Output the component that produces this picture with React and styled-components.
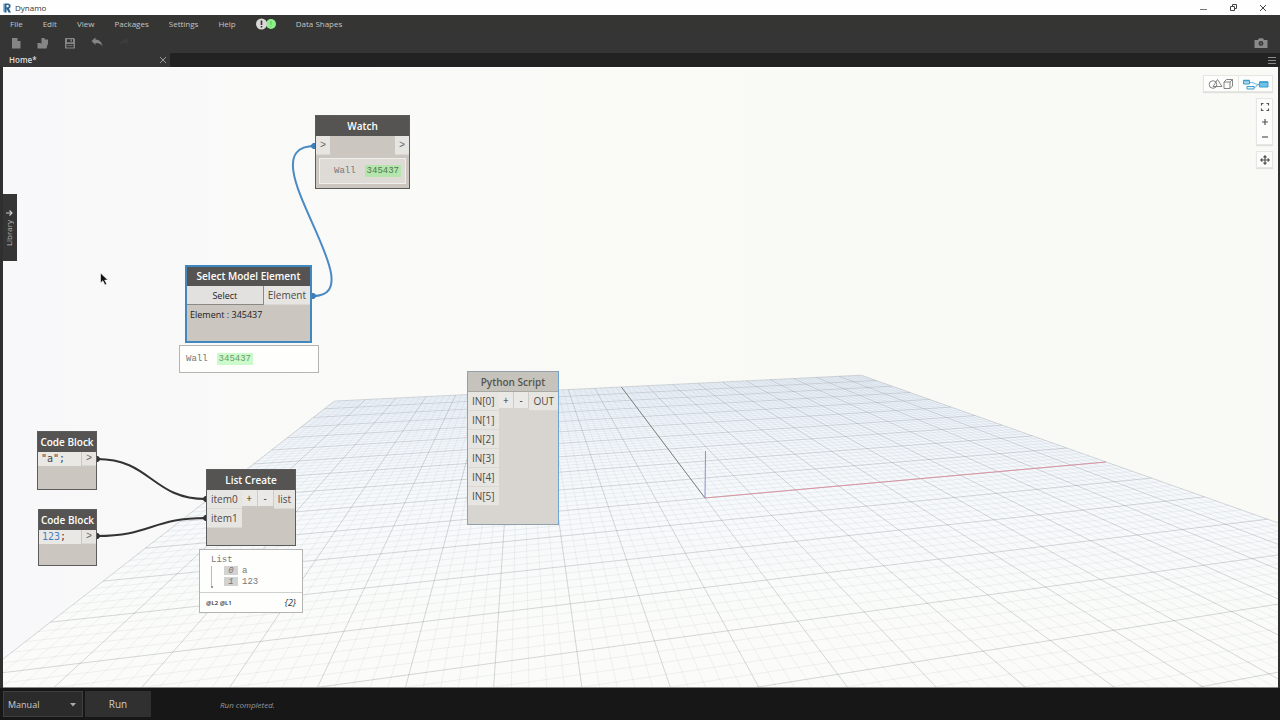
import React from 'react';
import styled, { createGlobalStyle, css } from 'styled-components';

const GlobalStyle = createGlobalStyle`
  * {
    box-sizing: border-box;
  }

  body {
    margin: 0;
    background-color: #2f2f2f;
    font-family: 'Open Sans', 'Noto Sans', sans-serif;
  }

  button,
  select {
    margin: 0;
    padding: 0;
    border: none;
    background: none;
    font-family: inherit;
    color: inherit;
  }

  svg {
    display: block;
  }
`;

const Window = styled.div`
  display: flex;
  flex-direction: column;
  height: 100vh;
  overflow: hidden;
`;

const TitleBar = styled.header`
  display: flex;
  align-items: center;
  justify-content: space-between;
  height: 15px;
  padding: 0 12px 0 2px;
  background-color: #fefefe;
  color: #333;
  flex-shrink: 0;
`;

const Brand = styled.h1`
  display: flex;
  align-items: center;
  gap: 3px;
  margin: 0;
  font-size: 8px;
  line-height: 15px;
  font-weight: 400;
`;

const WindowControls = styled.div`
  display: flex;
  gap: 20px;

  button {
    width: 10px;
    height: 10px;
  }
`;

const MenuBar = styled.nav`
  display: flex;
  align-items: center;
  gap: 20px;
  height: 18px;
  padding: 0 10px;
  background-color: #353533;
  color: #c4c4c4;
  flex-shrink: 0;

  button {
    font-size: 8px;
    line-height: 12px;
  }
`;

const Toolbar = styled.div`
  display: flex;
  align-items: center;
  gap: 15px;
  height: 20px;
  padding: 0 12px 0 10px;
  background-color: #353535;
  flex-shrink: 0;

  button:last-child {
    width: 14px;
    margin-left: auto;
  }
`;

const ToolButton = styled.button`
  width: 12px;
  height: 12px;
  color: ${({ $faint }) => ($faint ? '#3c3c3c' : '#858585')};
`;

const TabRow = styled.div`
  display: flex;
  align-items: center;
  justify-content: space-between;
  height: 14px;
  padding-right: 4px;
  background-color: #222;
  flex-shrink: 0;
`;

const Tab = styled.div`
  display: flex;
  align-items: center;
  justify-content: space-between;
  width: 170px;
  height: 14px;
  padding: 0 3px 0 9px;
  background-color: #353535;
  color: #ddd;
  font-size: 8px;
  font-weight: 600;
  line-height: 14px;

  button {
    width: 8px;
    height: 8px;
  }
`;

const TabMenu = styled.button`
  width: 8px;
  height: 8px;
`;

const Workspace = styled.main`
  position: relative;
  flex: 1;
  min-height: 0;
  margin: 0 2px 0 3px;
  overflow: hidden;
  border-top: 1px solid #fff;
  border-bottom: 1px solid #8a8a8a;
  background: linear-gradient(90deg, #f8f8fa 0, #fafaf8 30%, #f9faf5 60%);
`;

const Scene = styled.svg`
  position: absolute;
  inset: 0;
  width: 100%;
  height: 100%;
  pointer-events: none;
`;

const Library = styled.button`
  position: absolute;
  left: 0;
  top: 126px;
  display: flex;
  flex-direction: column;
  align-items: center;
  justify-content: center;
  gap: 3px;
  width: 14px;
  height: 67px;
  padding-right: 2px;
  background-color: #353535;
  color: #b5b5b5;

  span {
    writing-mode: vertical-rl;
    transform: rotate(180deg);
    font-size: 8px;
    line-height: 12px;
  }
`;

const ViewTools = styled.div`
  position: absolute;
  top: 7px;
  right: 5px;
  display: flex;
  flex-direction: column;
  align-items: flex-end;
  gap: 6px;
`;

const ToolGroup = styled.div`
  display: flex;
  flex-direction: ${({ $column }) => ($column ? 'column' : 'row')};
  border: 1px solid #e6e6e2;
  background-color: #fdfdfc;
  box-shadow: 0 1px 1px rgba(0, 0, 0, 0.1);

  button {
    display: flex;
    align-items: center;
    justify-content: center;
    width: ${({ $wide }) => ($wide ? '34px' : '15px')};
    height: 15px;
  }

  button + button {
    border-left: ${({ $wide }) => ($wide ? '1px solid #e6e6e2' : 'none')};
  }
`;

const NodeBox = styled.section`
  position: absolute;
  left: ${({ $x }) => $x}px;
  top: ${({ $y }) => $y}px;
  width: ${({ $w }) => $w}px;
  height: ${({ $h }) => $h}px;
  border: 1px solid #5c5c5c;
  background-color: #ccc6c0;
  color: #4a4a4a;

  h2 {
    margin: 0;
    height: 20px;
    background-color: #555452;
    color: #fff;
    font-size: 10px;
    font-weight: 600;
    line-height: 20px;
    text-align: center;
    white-space: nowrap;
  }

  ${({ $selected }) =>
    $selected &&
    css`
      border: 2px solid #4088bf;

      h2 {
        height: 19px;
        line-height: 19px;
      }
    `}

  ${({ $frozen }) =>
    $frozen &&
    css`
      border-color: #93a0ac;
      border-right-color: #6fa3d6;
      background-color: #d8d5d0;

      h2 {
        background-color: #c6c3bd;
        border-bottom: 1px solid #a9a7a2;
        color: #55554f;
      }
    `}
`;

const Row = styled.div`
  display: flex;
  justify-content: space-between;
  align-items: flex-start;
`;

const Ports = styled.div`
  display: flex;
  flex-direction: column;
`;

const Port = styled.span`
  min-width: 14px;
  height: ${({ $short }) => ($short ? '14px' : '19px')};
  padding: 0 4px;
  border-bottom: 1px solid #dad8d3;
  background-color: #e7e5e1;
  font-size: 10px;
  line-height: ${({ $short }) => ($short ? '14px' : '19px')};
  text-align: center;
  white-space: nowrap;
`;

const Arrow = styled(Port)`
  padding: 0 3px;
  font-family: 'Liberation Mono', monospace;
  color: #666;
`;

const SmallButton = styled.button`
  flex: 1;
  height: 16px;
  border-right: 1px solid #cfccc8;
  background-color: #ebe9e5;
  color: #333;
  font-size: 10px;
  line-height: 16px;
`;

const SelectButton = styled.button`
  flex: 1;
  height: 19px;
  border-right: 1px solid #8b8985;
  border-bottom: 1px solid #8b8985;
  background-color: #e2e1df;
  color: #222;
  font-size: 9px;
`;

const NodeText = styled.p`
  margin: 0;
  padding: 4px 3px;
  color: #222;
  font-size: 9px;
  line-height: 12px;
`;

const CodeLine = styled.code`
  flex: 1;
  height: 14px;
  padding-left: 3px;
  border-right: 1px solid #c9c5c0;
  background-color: #eae8e4;
  color: #444;
  font-family: 'DejaVu Sans Mono', monospace;
  font-size: 10px;
  line-height: 14px;

  b {
    font-weight: 400;
    color: #3f80c4;
  }
`;

const WatchBox = styled.div`
  display: flex;
  align-items: center;
  gap: 9px;
  height: 26px;
  margin: 3px;
  padding-left: 14px;
  border: 1px solid #f0eeea;
  background-color: #dedbd6;
  color: #777;
  font-family: 'Liberation Mono', monospace;
  font-size: 9px;
`;

const ElementId = styled.span`
  padding: 1px 2px;
  background-color: ${({ $light }) => ($light ? '#cdfacb' : '#b5e5ac')};
  color: ${({ $light }) => ($light ? '#6b9a6b' : '#4d7a4d')};
  line-height: 10px;
`;

const Preview = styled.div`
  position: absolute;
  left: ${({ $x }) => $x}px;
  top: ${({ $y }) => $y}px;
  width: ${({ $w }) => $w}px;
  height: ${({ $h }) => $h}px;
  border: 1px solid #b4b4b2;
  background-color: #fefefd;
  color: #777;
  font-family: 'Liberation Mono', monospace;
  font-size: 9px;
`;

const PreviewLine = styled.div`
  display: flex;
  align-items: center;
  gap: 9px;
  height: 26px;
  padding-left: 6px;
`;

const ListTree = styled.div`
  height: 43px;
  padding: 5px 0 0 11px;
  border-bottom: 1px solid #cfcfcd;
  line-height: 11px;

  ol {
    margin: 0;
    padding: 0 0 0 13px;
    list-style: none;
    background: linear-gradient(#999, #999) 0 20px / 2px 2px no-repeat,
      linear-gradient(#bbb, #bbb) 0 0 / 1px 22px no-repeat;
  }

  li {
    display: flex;
    gap: 4px;
    height: 11px;
  }

  i {
    width: 14px;
    height: 9px;
    background-color: #d2d2d0;
    line-height: 10px;
    text-align: center;
  }
`;

const ListFooter = styled.div`
  display: flex;
  align-items: center;
  justify-content: space-between;
  height: 19px;
  padding: 0 6px;
  color: #333;
  font-family: 'Open Sans', sans-serif;
  font-size: 6px;
  font-weight: 600;

  em {
    font-size: 9px;
    font-weight: 400;
  }
`;

const StatusBar = styled.footer`
  display: flex;
  align-items: center;
  gap: 2px;
  height: 32px;
  padding: 0 3px;
  background-color: #171717;
  color: #ccc;
  flex-shrink: 0;
`;

const RunMode = styled.label`
  position: relative;
  width: 80px;

  select {
    width: 100%;
    height: 26px;
    padding-left: 4px;
    border: 1px solid #3f3f3f;
    background-color: #2b2b2b;
    font-size: 9px;
    appearance: none;
  }

  svg {
    position: absolute;
    right: 7px;
    top: 12px;
  }
`;

const RunButton = styled.button`
  width: 66px;
  height: 26px;
  background-color: #303030;
  font-size: 10px;
`;

const Status = styled.span`
  padding-left: 67px;
  color: #999;
  font-size: 8px;
  font-style: italic;
`;

// Perspective of the ground plane, in workspace pixels. The two axes run to
// their own vanishing points from the origin.
const ORIGIN = [702, 430];
const VANISH_X = [3532, 176];
const VANISH_Y = [519, 187];
const SCALE_X = 0.01651;
const SCALE_Y = 0.0841;
const NEAR = -9;

const project = (u, v) => {
  const a = u * SCALE_X;
  const b = v * SCALE_Y;
  const w = 1 + a + b;
  return [0, 1]
    .map((i) => ((ORIGIN[i] + a * VANISH_X[i] + b * VANISH_Y[i]) / w).toFixed(1))
    .join(' ');
};

const segment = (u1, v1, u2, v2) => `M${project(u1, v1)}L${project(u2, v2)}`;

const gridPath = (major) => {
  const lines = [];
  for (let i = -50; i <= 50; i += 1) {
    if ((i % 5 === 0) === major) {
      lines.push(segment(i / 5, NEAR, i / 5, 10));
      if (i / 5 >= NEAR) lines.push(segment(-10, i / 5, 10, i / 5));
    }
  }
  return lines.join('');
};

const ground = `M${project(-10, 10)}L${project(10, 10)}L${project(10, NEAR)}L${project(-10, NEAR)}Z`;

const Background = () => (
  <Scene aria-hidden="true">
    <defs>
      <linearGradient id="ground" gradientUnits="userSpaceOnUse" x1="0" y1="307" x2="0" y2="560">
        <stop offset="0" stopColor="#edf3fa" />
        <stop offset="0.4" stopColor="#f5f8fb" />
        <stop offset="1" stopColor="#fbfcf9" />
      </linearGradient>
    </defs>
    <path d={ground} fill="url(#ground)" />
    <g fill="none">
      <path d={gridPath(false)} stroke="#8494a4" strokeOpacity="0.11" />
      <path d={gridPath(true)} stroke="#707880" strokeOpacity="0.28" />
      <path d={segment(0, 0, 0, 10)} stroke="#7c877d" />
      <path d={segment(0, 0, 10, 0)} stroke="#d895a0" />
      <path d="M702 430L702.500 383" stroke="#8a92c8" />
    </g>
  </Scene>
);

const Wires = () => (
  <Scene aria-hidden="true">
    <g fill="none" strokeWidth="2">
      <path d="M310 228C376 228 239 78 312 78" stroke="#4a8ac4" />
      <path d="M94 391C148 391 149 431 203 431" stroke="#333" />
      <path d="M94 468C148 468 149 450 203 450" stroke="#333" />
    </g>
    <g fill="#3d7fba">
      <path d="M309 225h2l3 3l-3 3h-2z" />
      <path d="M312 75h-2l-3 3l3 3h2z" />
    </g>
    <g fill="#333">
      <path d="M94 388h1l3 3l-3 3h-1zM94 465h1l3 3l-3 3h-1z" />
      <path d="M203 428h-1l-3 3l3 3h1zM203 447h-1l-3 3l3 3h1z" />
    </g>
  </Scene>
);

const Pointer = () => (
  <Scene aria-hidden="true">
    <path
      d="M97.500 205v10l2.400 -2.200l2 4.200l1.800 -0.900l-2 -4h3.200z"
      fill="#111"
      stroke="#fff"
      strokeWidth="0.600"
    />
  </Scene>
);

const RevitLogo = () => (
  <svg width="10" height="10" viewBox="0 0 10 10">
    <path d="M1 0.500l1.800 0.500v8.500l-1.800 -1z" fill="#8fbfe2" />
    <path
      fillRule="evenodd"
      d="M2.500 0.500h4l2 1.200v2.600l-1.500 1.400l2 3.800h-2.500l-1.700 -3.300h-0.300v3.300h-2zM4.500 2v2.200h1.600l0.600 -0.600v-1l-0.600 -0.600z"
      fill="#2d6390"
    />
  </svg>
);

const Notices = () => (
  <svg width="20" height="12" viewBox="0 0 20 12" role="img" aria-label="Notifications">
    <circle cx="15" cy="6" r="5" fill="#8df08a" />
    <path d="M15 3v4M15 8v1" stroke="#6fd070" strokeWidth="1.500" />
    <circle cx="5.500" cy="6" r="5.500" fill="#d9d9d7" />
    <path d="M5.500 2.500v4.500M5.500 8v1.500" stroke="#333" strokeWidth="1.600" />
  </svg>
);

const icons = {
  new: <path d="M2 1h5.500l3 3v7.500h-8.500zM7.500 1v3h3" />,
  open: <path d="M4.500 1h3l0.500 1.500h3v5h-6.500zM0.500 6h3l1.500 1.500h5.500l-1 4h-9z" />,
  save: (
    <path
      fillRule="evenodd"
      d="M1 1h9l1 1v9.500h-10zM3 2.200v3h6v-3zM2.500 7v3.500h7v-3.500zM3.500 8h5v0.800h-5zM6.500 2.500h1.500v2h-1.500z"
    />
  ),
  undo: <path d="M0.500 4l4 -3.500v2c4 0.200 6.500 3 7 7c-1.500 -2.800 -3.800 -3.600 -7 -3.500v2z" />,
  redo: <path d="M11.500 4l-4 -3.500v2c-4 0.200 -6.500 3 -7 7c1.500 -2.800 3.800 -3.600 7 -3.500v2z" />,
};

const Camera = () => (
  <svg width="14" height="12" viewBox="0 0 14 12">
    <path d="M0.500 3h3.500l1 -1.800h4l1 1.800h3.500v8h-13z" fill="#8a8a8a" />
    <circle cx="7" cy="6.500" r="2.400" fill="#3a3a3a" />
    <circle cx="7" cy="6.500" r="1" fill="#666" />
  </svg>
);

const Geometry = () => (
  <svg width="26" height="12" viewBox="0 0 26 12" fill="none" stroke="#777" strokeWidth="0.900">
    <circle cx="5" cy="6.500" r="3.800" />
    <path d="M5 8.500l4.500 -7l4.500 7z" />
    <path d="M16 4h6v6.500h-6zM16 4l2.500 -2.500h6l-2.500 2.500M24.500 1.500v6.500l-2.500 2.500" />
  </svg>
);

const Graph = () => (
  <svg width="26" height="12" viewBox="0 0 26 12" fill="none" stroke="#3a9fd0">
    <path d="M7 4.500c5 0 5 2 9 2M11 9.500c3 0 2 -3 5 -3" strokeWidth="0.800" />
    <path d="M0.500 2.500h6v3.500h-6z" fill="#a9d8ee" />
    <path d="M4 8.500h7v2.500h-7z" fill="#dff1f9" />
    <path d="M16.500 4h8.500v5h-8.500z" fill="#6ec0e4" />
    <path d="M0.500 2.500h6M16.500 4h8.500" strokeWidth="1.500" />
  </svg>
);

const viewIcons = {
  fit: <path d="M1.500 3.500v-2h2M6.500 1.500h2v2M8.500 6.500v2h-2M3.500 8.500h-2v-2" />,
  plus: <path d="M2 5h6M5 2v6" />,
  minus: <path d="M2 5h6" />,
  pan: (
    <path d="M1 5h8M5 1v8M3.500 2.300l1.500 -1.500l1.500 1.500M3.500 7.700l1.500 1.500l1.500 -1.500M2.300 3.500l-1.500 1.500l1.500 1.500M7.700 3.500l1.500 1.500l-1.500 1.500" />
  ),
};

const ViewButton = ({ icon, label }) => (
  <button aria-label={label}>
    <svg width="10" height="10" viewBox="0 0 10 10" fill="none" stroke="#555" strokeWidth="1.200">
      {viewIcons[icon]}
    </svg>
  </button>
);

const Header = () => (
  <>
    <TitleBar>
      <Brand>
        <RevitLogo />
        Dynamo
      </Brand>
      <WindowControls>
        <button aria-label="Minimize">
          <svg width="10" height="10" stroke="#777">
            <path d="M2 6.500h7" />
          </svg>
        </button>
        <button aria-label="Restore">
          <svg width="10" height="10" fill="none" stroke="#444">
            <path d="M2.500 3.500h4v4h-4zM4.500 3.500v-2h4v4h-2" />
          </svg>
        </button>
        <button aria-label="Close">
          <svg width="10" height="10" stroke="#444">
            <path d="M2 2l6 6M8 2l-6 6" />
          </svg>
        </button>
      </WindowControls>
    </TitleBar>
    <MenuBar>
      {['File', 'Edit', 'View', 'Packages', 'Settings', 'Help'].map((item) => (
        <button key={item}>{item}</button>
      ))}
      <Notices />
      <button>Data Shapes</button>
    </MenuBar>
    <Toolbar>
      {Object.keys(icons).map((name) => (
        <ToolButton key={name} aria-label={name} $faint={name === 'redo'}>
          <svg width="12" height="12" viewBox="0 0 12 12" fill="currentColor">
            {icons[name]}
          </svg>
        </ToolButton>
      ))}
      <ToolButton aria-label="Export image">
        <Camera />
      </ToolButton>
    </Toolbar>
    <TabRow>
      <Tab>
        Home*
        <button aria-label="Close tab">
          <svg width="8" height="8" stroke="#999">
            <path d="M1 1l6 6M7 1l-6 6" />
          </svg>
        </button>
      </Tab>
      <TabMenu aria-label="Tabs">
        <svg width="8" height="8" stroke="#8a8a8a">
          <path d="M0 1.500h8M0 4.500h8M0 7.500h8" />
        </svg>
      </TabMenu>
    </TabRow>
  </>
);

const CodeBlock = ({ x, y, h, w, children }) => (
  <NodeBox $x={x} $y={y} $w={w} $h={h}>
    <h2>Code Block</h2>
    <Row>
      <CodeLine>{children}</CodeLine>
      <Arrow $short>&gt;</Arrow>
    </Row>
  </NodeBox>
);

const Nodes = () => (
  <>
    <NodeBox $x={312} $y={47} $w={95} $h={74}>
      <h2>Watch</h2>
      <Row>
        <Arrow>&gt;</Arrow>
        <Arrow>&gt;</Arrow>
      </Row>
      <WatchBox>
        Wall <ElementId>345437</ElementId>
      </WatchBox>
    </NodeBox>

    <NodeBox $x={182} $y={197} $w={127} $h={78} $selected>
      <h2>Select Model Element</h2>
      <Row>
        <SelectButton>Select</SelectButton>
        <Port>Element</Port>
      </Row>
      <NodeText>Element : 345437</NodeText>
    </NodeBox>
    <Preview $x={176} $y={277} $w={140} $h={28}>
      <PreviewLine>
        Wall <ElementId $light>345437</ElementId>
      </PreviewLine>
    </Preview>

    <CodeBlock x={34} y={363} w={60} h={59}>
      &quot;a&quot;;
    </CodeBlock>
    <CodeBlock x={35} y={441} w={59} h={57}>
      <b>123</b>;
    </CodeBlock>

    <NodeBox $x={203} $y={401} $w={90} $h={77}>
      <h2>List Create</h2>
      <Row>
        <Ports>
          <Port>item0</Port>
          <Port>item1</Port>
        </Ports>
        <SmallButton>+</SmallButton>
        <SmallButton>-</SmallButton>
        <Port>list</Port>
      </Row>
    </NodeBox>
    <Preview $x={196} $y={481} $w={104} $h={64}>
      <ListTree>
        List
        <ol>
          <li>
            <i>0</i>a
          </li>
          <li>
            <i>1</i>123
          </li>
        </ol>
      </ListTree>
      <ListFooter>
        <span>@L2 @L1</span>
        <em>{'{2}'}</em>
      </ListFooter>
    </Preview>

    <NodeBox $x={464} $y={303} $w={92} $h={154} $frozen>
      <h2>Python Script</h2>
      <Row>
        <Ports>
          {[0, 1, 2, 3, 4, 5].map((n) => (
            <Port key={n}>IN[{n}]</Port>
          ))}
        </Ports>
        <SmallButton>+</SmallButton>
        <SmallButton>-</SmallButton>
        <Port>OUT</Port>
      </Row>
    </NodeBox>
  </>
);

const App = () => {
  return (
    <Window>
      <GlobalStyle />
      <Header />
      <Workspace>
        <Background />
        <Nodes />
        <Wires />
        <Library>
          <svg width="8" height="8" fill="none" stroke="#ccc" strokeWidth="1.200">
            <path d="M1 4h6M4.500 1.500l2.500 2.500l-2.500 2.500" />
          </svg>
          <span>Library</span>
        </Library>
        <ViewTools>
          <ToolGroup $wide>
            <button aria-label="Background preview">
              <Geometry />
            </button>
            <button aria-label="Graph view">
              <Graph />
            </button>
          </ToolGroup>
          <ToolGroup $column>
            <ViewButton icon="fit" label="Zoom to fit" />
            <ViewButton icon="plus" label="Zoom in" />
            <ViewButton icon="minus" label="Zoom out" />
          </ToolGroup>
          <ToolGroup>
            <ViewButton icon="pan" label="Pan" />
          </ToolGroup>
        </ViewTools>
        <Pointer />
      </Workspace>
      <StatusBar>
        <RunMode>
          <select aria-label="Run mode" defaultValue="Manual">
            <option>Manual</option>
            <option>Automatic</option>
          </select>
          <svg width="6" height="4" fill="#aaa">
            <path d="M0 0h6l-3 3.500z" />
          </svg>
        </RunMode>
        <RunButton>Run</RunButton>
        <Status>Run completed.</Status>
      </StatusBar>
    </Window>
  );
};

export default App;
